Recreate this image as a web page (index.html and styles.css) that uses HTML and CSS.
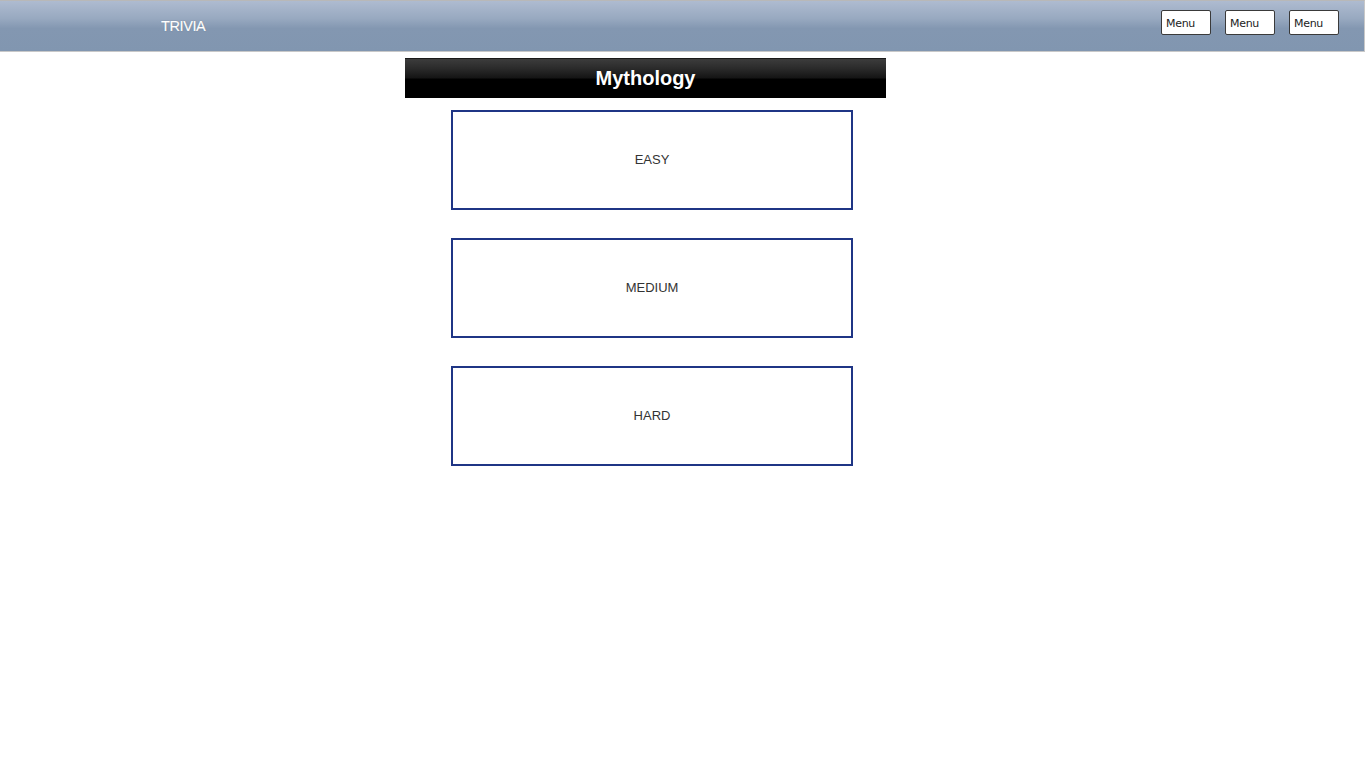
FILE: index.html
```html
<!DOCTYPE html>
<html>
<head>
<meta charset="utf-8">
<link rel="stylesheet" href="styles.css">
</head>
<body>
<header class="topbar">
  <div class="brand">TRIVIA</div>
  <nav class="menus">
    <span class="menu">Menu</span>
    <span class="menu">Menu</span>
    <span class="menu">Menu</span>
  </nav>
</header>
<main class="content">
  <h1 class="title">Mythology</h1>
  <div class="levels">
    <div class="level">EASY</div>
    <div class="level">MEDIUM</div>
    <div class="level">HARD</div>
  </div>
</main>
</body>
</html>
```
FILE: styles.css
```css
html, body {
  margin: 0;
  padding: 0;
  background: #fff;
  font-family: "Liberation Sans", Arial, sans-serif;
}
.topbar {
  box-sizing: border-box;
  width: 1365px;
  height: 52px;
  border-top: 1px solid #b8b8b8;
  border-bottom: 1px solid #c8c8c8;
  border-right: 1px solid #c8c8c8;
  background: linear-gradient(to bottom, #aebbd0 0%, #98a9c0 35%, #8397b1 55%, #8196b0 100%);
  display: flex;
  align-items: center;
  justify-content: space-between;
  padding: 0 25px 0 161px;
}
.brand {
  color: #fff;
  font-size: 14.5px;
  letter-spacing: -0.4px;
  text-shadow: 0 0 1px rgba(60,70,90,0.6);
  -webkit-text-stroke: 0.2px #fff;
}
.menus {
  display: flex;
  gap: 14px;
  margin-top: -7px;
}
.menu {
  box-sizing: border-box;
  width: 50px;
  height: 25px;
  background: #fff;
  border: 1px solid #3a3a3a;
  border-radius: 2px;
  font-family: "DejaVu Sans", sans-serif;
  font-size: 11px;
  letter-spacing: -0.3px;
  color: #222;
  display: flex;
  align-items: center;
  padding-left: 4px;
  padding-top: 1px;
}
.content {
  padding-top: 6px;
}
.title {
  box-sizing: border-box;
  margin: 0 0 0 405px;
  width: 481px;
  height: 40px;
  background: linear-gradient(to bottom, #3c3c3c 0%, #2a2a2a 25%, #151515 48%, #000 52%, #000 100%);
  border-top: 1px solid #1a1a1a;
  color: #fff;
  font-size: 20px;
  font-weight: bold;
  text-align: center;
  line-height: 38px;
  text-shadow: 0 1px 1px rgba(0,0,0,0.8);
}
.levels {
  margin: 12px 0 0 451px;
  display: flex;
  flex-direction: column;
  gap: 28px;
}
.level {
  box-sizing: border-box;
  width: 402px;
  height: 100px;
  border: 2px solid #1f3585;
  display: flex;
  align-items: center;
  justify-content: center;
  font-size: 13px;
  color: #333;
  padding-bottom: 2px;
}
```
